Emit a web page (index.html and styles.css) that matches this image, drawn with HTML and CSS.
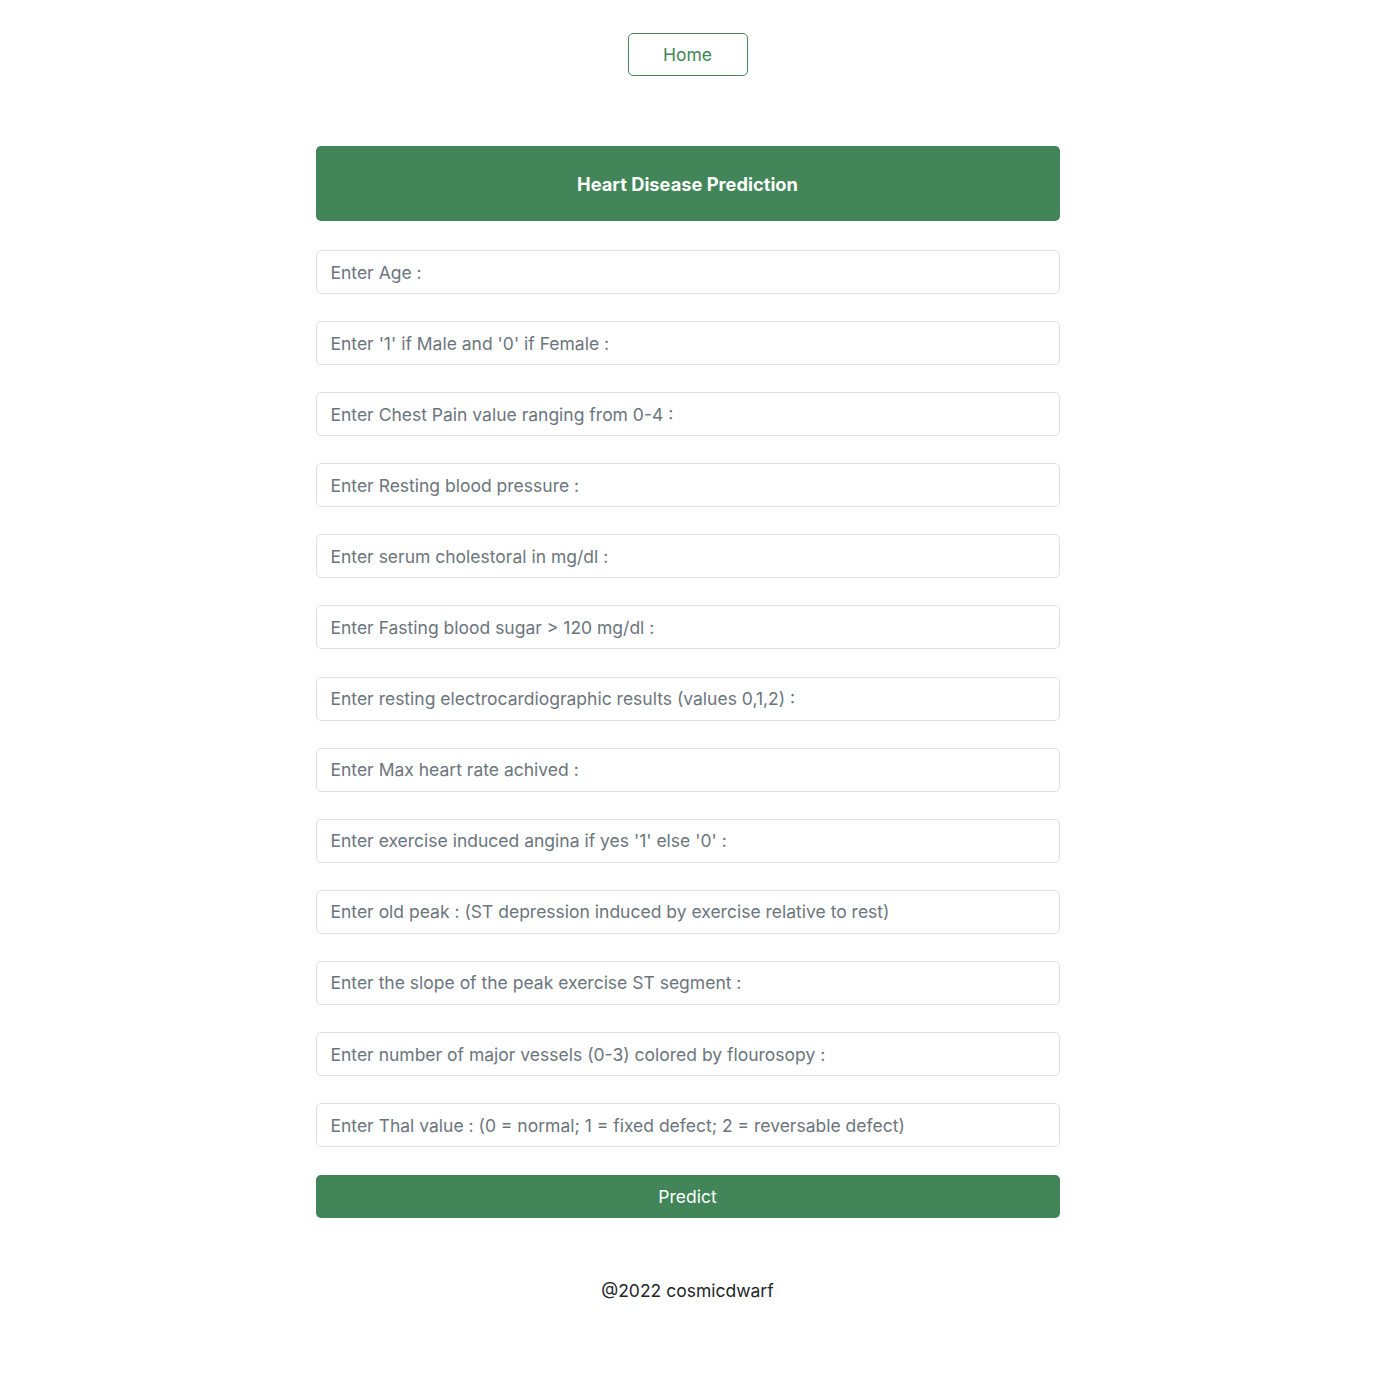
FILE: index.html
```html
<!DOCTYPE html>
<html lang="en">
<head>
<meta charset="utf-8">
<title>Heart Disease Prediction</title>
<link rel="stylesheet" href="styles.css">
</head>
<body>
<nav class="nav">
  <a class="home-btn" href="#">Home</a>
</nav>
<main class="container">
  <div class="banner">Heart Disease Prediction</div>
  <form class="form">
    <input class="field" type="text" placeholder="Enter Age :">
    <input class="field" type="text" placeholder="Enter '1' if Male and '0' if Female :">
    <input class="field" type="text" placeholder="Enter Chest Pain value ranging from 0-4 :">
    <input class="field" type="text" placeholder="Enter Resting blood pressure :">
    <input class="field" type="text" placeholder="Enter serum cholestoral in mg/dl :">
    <input class="field" type="text" placeholder="Enter Fasting blood sugar > 120 mg/dl :">
    <input class="field" type="text" placeholder="Enter resting electrocardiographic results (values 0,1,2) :">
    <input class="field" type="text" placeholder="Enter Max heart rate achived :">
    <input class="field" type="text" placeholder="Enter exercise induced angina if yes '1' else '0' :">
    <input class="field" type="text" placeholder="Enter old peak : (ST depression induced by exercise relative to rest)">
    <input class="field" type="text" placeholder="Enter the slope of the peak exercise ST segment :">
    <input class="field" type="text" placeholder="Enter number of major vessels (0-3) colored by flourosopy :">
    <input class="field" type="text" placeholder="Enter Thal value : (0 = normal; 1 = fixed defect; 2 = reversable defect)">
    <button class="predict" type="button">Predict</button>
  </form>
</main>
<footer class="footer">@2022 cosmicdwarf</footer>
</body>
</html>
```
FILE: styles.css
```css
* { box-sizing: border-box; }
body {
  margin: 0;
  padding-right: 4px;
  background: #ffffff;
  font-family: Inter, "Liberation Sans", Arial, sans-serif;
  color: #212529;
}
.nav {
  display: flex;
  justify-content: center;
  padding-top: 33px;
}
.home-btn {
  display: flex;
  align-items: center;
  justify-content: center;
  width: 120px;
  height: 43px;
  border: 1.5px solid #418558;
  border-radius: 5px;
  color: #418558;
  font-size: 17.5px;
  text-decoration: none;
}
.container {
  width: 744px;
  margin: 70px auto 0;
}
.banner {
  height: 75px;
  background: #418558;
  border-radius: 5px;
  color: #ffffff;
  font-weight: 700;
  font-size: 18.3px;
  display: flex;
  align-items: center;
  justify-content: center;
}
.form {
  display: flex;
  flex-direction: column;
  gap: 27.1px;
  margin-top: 29px;
}
.field {
  height: 44px;
  width: 100%;
  border: 1.5px solid #dee2e6;
  border-radius: 5px;
  padding: 0 14px;
  font-family: inherit;
  font-size: 17.5px;
  color: #212529;
  background: #fff;
}
.field::placeholder { color: #6c757d; opacity: 1; }
.predict {
  height: 43px;
  width: 100%;
  margin-top: 1px;
  border: none;
  border-radius: 5px;
  background: #418558;
  color: #fff;
  font-family: inherit;
  font-size: 17.5px;
}
.footer {
  text-align: center;
  font-size: 17.5px;
  margin-top: 62px;
}
```
